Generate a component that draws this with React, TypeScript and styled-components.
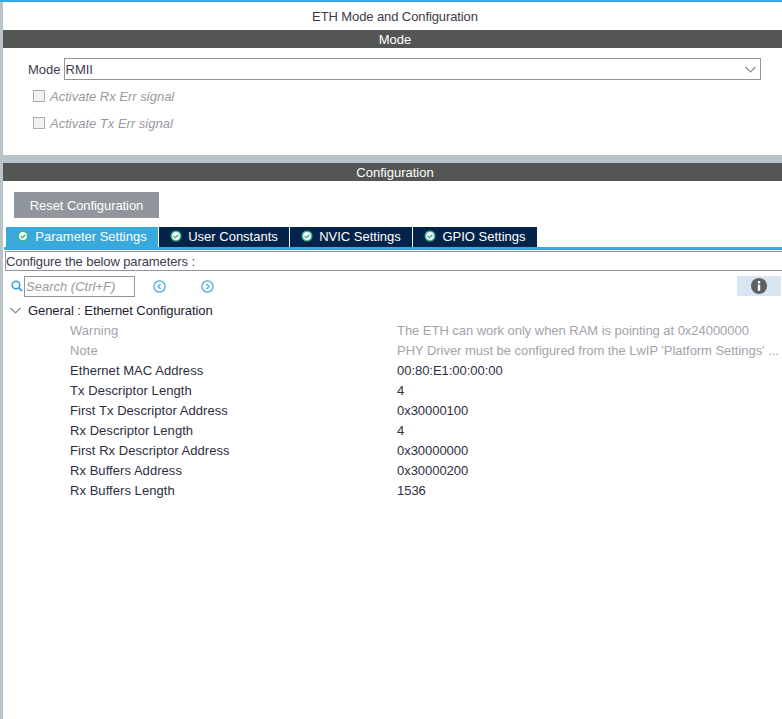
import React from "react";
import styled, { createGlobalStyle } from "styled-components";

const Global = createGlobalStyle`
  html, body { margin: 0; padding: 0; background: #fff; }
  body { font-family: "Liberation Sans", Arial, sans-serif; font-size: 13px; color: #2b2b3a; }
`;

const Page = styled.div`
  width: 782px;
  height: 719px;
  overflow: hidden;
  display: flex;
  flex-direction: column;
  border-top: 2px solid #39a9dc;
  box-sizing: border-box;
`;
const Body = styled.div`
  flex: 1;
  display: flex;
  flex-direction: column;
  border-left: 3px solid #b9c4ca;
  min-height: 0;
`;
const Title = styled.div`
  height: 28px;
  line-height: 29px;
  padding-left: 5px;
  text-align: center;
  letter-spacing: -0.1px;
  color: #3c3c46;
`;
const SectionBar = styled.div`
  height: 18px;
  line-height: 20px;
  padding-left: 5px;
  background: #545654;
  color: #fff;
  text-align: center;
`;
const ModeSection = styled.div`
  height: 107px;
  padding: 10px 21px 0 25px;
  box-sizing: border-box;
`;
const ModeRow = styled.div`
  display: flex;
  align-items: center;
  gap: 3px;
  height: 22px;
`;
const ModeLabel = styled.span`
  color: #3c3c50;
`;
const Select = styled.div`
  flex: 1;
  height: 22px;
  box-sizing: border-box;
  border: 1px solid #929699;
  display: flex;
  align-items: center;
  justify-content: space-between;
  padding: 0 4px 0 1px;
  color: #3c3c50;
`;
const CheckRow = styled.label`
  display: flex;
  align-items: center;
  gap: 5px;
  height: 27px;
  margin-left: 5px;
  font-style: italic;
  color: #9a9aa0;
`;
const CheckText = styled.span`
  line-height: 15px;
  padding-top: 2px;
`;
const CheckBox = styled.span`
  width: 10px;
  height: 10px;
  border: 1px solid #a8adb0;
  background: #eff1f3;
  display: block;
`;
const Checks = styled.div`
  padding: 2px 0 0 0;
`;
const Gutter = styled.div`
  height: 8px;
  background: #b9c4ca;
`;
const ConfigArea = styled.div`
  padding: 11px 0 0 0;
  flex: 1;
  min-height: 0;
  display: flex;
  flex-direction: column;
`;
const ResetButton = styled.button`
  width: 145px;
  height: 26px;
  margin-left: 11px;
  border: none;
  padding: 0;
  background: #90969c;
  color: #fff;
  font: 13px "Liberation Sans", Arial, sans-serif;
  letter-spacing: -0.08px;
`;
const Tabs = styled.div`
  display: flex;
  gap: 1px;
  margin: 9px 0 0 3px;
  height: 20px;
`;
const Tab = styled.div<{ $active?: boolean; $w: number }>`
  width: ${(p) => p.$w}px;
  height: 20px;
  padding-bottom: 2px;
  box-sizing: border-box;
  background: ${(p) => (p.$active ? "#39a9dc" : "#03234b")};
  color: #fff;
  display: flex;
  align-items: center;
  justify-content: center;
  gap: 6px;
`;
const TabRule = styled.div`
  height: 3px;
  margin-left: 1px;
  background: #39a9dc;
`;
const HintBar = styled.div`
  margin: 1px 0 0 2px;
  border-top: 1px solid #929699;
  border-bottom: 1px solid #929699;
  border-left: 1px solid #929699;
  height: 18px;
  line-height: 20px;
  letter-spacing: -0.1px;
  color: #3c3c50;
`;
const SearchRow = styled.div`
  display: flex;
  align-items: center;
  height: 22px;
  margin-top: 4px;
  padding-left: 8px;
  position: relative;
`;
const SearchBox = styled.div`
  width: 108px;
  margin-left: 1px;
  border: 1px solid #929699;
  height: 19px;
  line-height: 20px;
  padding-left: 1px;
  font-style: italic;
  color: #9a9aa0;
`;
const NavButton = styled.span<{ $gap: number }>`
  display: flex;
  margin-left: ${(p) => p.$gap}px;
`;
const InfoBadge = styled.div`
  position: absolute;
  right: 1px;
  top: 1px;
  width: 44px;
  height: 20px;
  background: #d8e6f3;
  display: flex;
  align-items: center;
  justify-content: center;
`;
const TreeHead = styled.div`
  display: flex;
  align-items: center;
  height: 20px;
  margin-top: 3px;
  padding-left: 7px;
  gap: 7px;
  letter-spacing: -0.08px;
  color: #1e1e32;
`;
const Rows = styled.div`
  display: flex;
  flex-direction: column;
`;
const Row = styled.div<{ $muted?: boolean }>`
  display: grid;
  grid-template-columns: 327px 1fr;
  padding-left: 67px;
  height: 20px;
  line-height: 22px;
  color: ${(p) => (p.$muted ? "#a3a3aa" : "#2e2e42")};
  white-space: nowrap;
  overflow: hidden;
`;
const RowLabel = styled.span`
  letter-spacing: 0.05px;
`;
const RowValue = styled.span`
  letter-spacing: -0.04px;
`;

const CheckIcon = () => (
  <svg width="12" height="12" viewBox="0 0 12 12">
    <circle cx="6" cy="6" r="5.5" fill="#3fb58a" />
    <circle cx="6" cy="6" r="3.9" fill="#fff" />
    <path d="M3.7 6l1.7 1.7 3-3" fill="none" stroke="#3fb58a" strokeWidth="1.4" />
  </svg>
);
const Chevron = ({ color = "#85888c" }: { color?: string }) => (
  <svg width="11" height="7" viewBox="0 0 11 7">
    <path d="M0.5 1l5 5 5-5" fill="none" stroke={color} strokeWidth="1.1" />
  </svg>
);
const Nav = ({ dir }: { dir: "l" | "r" }) => (
  <svg width="13" height="13" viewBox="0 0 13 13">
    <circle cx="6.5" cy="6.5" r="5.6" fill="none" stroke="#39a9dc" strokeWidth="1.2" />
    <path d={dir === "l" ? "M7.6 4L5 6.5 7.6 9" : "M5.4 4L8 6.5 5.4 9"} fill="none" stroke="#39a9dc" strokeWidth="1.1" />
  </svg>
);
const SearchIcon = () => (
  <svg width="12" height="12" viewBox="0 0 12 12">
    <circle cx="5" cy="5" r="3.8" fill="none" stroke="#2d9fd8" strokeWidth="1.5" />
    <path d="M7.8 7.8L11 11" stroke="#2d9fd8" strokeWidth="1.7" />
  </svg>
);
const InfoIcon = () => (
  <svg width="16" height="16" viewBox="0 0 16 16">
    <circle cx="8" cy="8" r="8" fill="#5e5f61" />
    <rect x="6.8" y="3" width="2.4" height="2.4" fill="#fff" />
    <rect x="6.8" y="6.6" width="2.4" height="6.2" fill="#fff" />
  </svg>
);

const tabs = [
  { label: "Parameter Settings", w: 152, active: true },
  { label: "User Constants", w: 130 },
  { label: "NVIC Settings", w: 122 },
  { label: "GPIO Settings", w: 124 },
];
const rows: [string, string, boolean?][] = [
  ["Warning", "The ETH can work only when RAM is pointing at 0x24000000", true],
  ["Note", "PHY Driver must be configured from the LwIP 'Platform Settings' ...", true],
  ["Ethernet MAC Address", "00:80:E1:00:00:00"],
  ["Tx Descriptor Length", "4"],
  ["First Tx Descriptor Address", "0x30000100"],
  ["Rx Descriptor Length", "4"],
  ["First Rx Descriptor Address", "0x30000000"],
  ["Rx Buffers Address", "0x30000200"],
  ["Rx Buffers Length", "1536"],
];

export default function App() {
  return (
    <Page>
      <Global />
      <Body>
        <Title>ETH Mode and Configuration</Title>
        <SectionBar>Mode</SectionBar>
        <ModeSection>
          <ModeRow>
            <ModeLabel>Mode</ModeLabel>
            <Select>
              RMII
              <Chevron />
            </Select>
          </ModeRow>
          <Checks>
            <CheckRow><CheckBox /><CheckText>Activate Rx Err signal</CheckText></CheckRow>
            <CheckRow><CheckBox /><CheckText>Activate Tx Err signal</CheckText></CheckRow>
          </Checks>
        </ModeSection>
        <Gutter />
        <SectionBar>Configuration</SectionBar>
        <ConfigArea>
          <ResetButton>Reset Configuration</ResetButton>
          <Tabs>
            {tabs.map((t) => (
              <Tab key={t.label} $active={t.active} $w={t.w}>
                <CheckIcon />
                {t.label}
              </Tab>
            ))}
          </Tabs>
          <TabRule />
          <HintBar>Configure the below parameters :</HintBar>
          <SearchRow>
            <SearchIcon />
            <SearchBox>Search (Ctrl+F)</SearchBox>
            <NavButton $gap={18}><Nav dir="l" /></NavButton>
            <NavButton $gap={35}><Nav dir="r" /></NavButton>
            <InfoBadge><InfoIcon /></InfoBadge>
          </SearchRow>
          <TreeHead>
            <Chevron />
            General : Ethernet Configuration
          </TreeHead>
          <Rows>
            {rows.map(([k, v, m]) => (
              <Row key={k} $muted={m}>
                <RowLabel>{k}</RowLabel>
                <RowValue>{v}</RowValue>
              </Row>
            ))}
          </Rows>
        </ConfigArea>
      </Body>
    </Page>
  );
}
